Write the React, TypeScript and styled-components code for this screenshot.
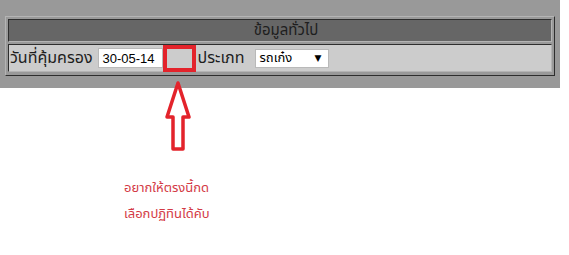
import styled, { createGlobalStyle } from "styled-components";

const GlobalStyle = createGlobalStyle`
    body {
        margin: 0;
        background: #fff;
        font-family: Tahoma, "Noto Sans Thai", "Noto Sans", sans-serif;
    }
`;

const Page = styled.div`
    position: relative;
    width: 569px;
    height: 255px;
`;

const GreyBand = styled.div`
    width: 560px;
    height: 88px;
    background: #999999;
    padding: 16px 0 0 5px;
    box-sizing: border-box;
`;

const Frame = styled.div`
    width: 550px;
    box-sizing: border-box;
    border: 1px solid;
    border-color: #b4b4b4 #2e2e2e #2e2e2e #b4b4b4;
    padding: 2px 2px 3px;
    display: grid;
    row-gap: 2px;
`;

const Cell = styled.div<{ $head?: boolean }>`
    border: 1px solid;
    border-color: #2e2e2e #b4b4b4 #b4b4b4 #2e2e2e;
    background: ${p => p.$head ? "#666666" : "#cccccc"};
    height: ${p => p.$head ? "21px" : "26px"};
    display: flex;
    align-items: center;
    justify-content: ${p => p.$head ? "center" : "flex-start"};
    color: #1e1e1e;
    font-size: ${p => p.$head ? "15px" : "16px"};
    padding: ${p => p.$head ? "0 0 0 12px" : "0 1px"};
`;

const Label = styled.span`
    white-space: nowrap;
`;

const DateBox = styled.input`
    width: 65px;
    height: 20px;
    box-sizing: border-box;
    margin: 0 0 0 6px;
    border: 1px solid #b9b9b9;
    background: #fff;
    padding: 0 3px;
    font-family: "Liberation Sans", Arial, sans-serif;
    font-size: 13px;
    color: #000;
`;

const CalendarSlot = styled.span`
    position: relative;
    width: 34px;
    height: 20px;
    flex: none;

    &::after {
        content: "";
        position: absolute;
        left: 0;
        top: -3px;
        width: 33px;
        height: 27px;
        box-sizing: border-box;
        border: 4px solid #e3232b;
    }
`;

const TypeSelect = styled.div`
    width: 74px;
    height: 19px;
    box-sizing: border-box;
    margin-left: 10px;
    border: 1px solid #b9b9b9;
    background: #fff;
    display: flex;
    align-items: center;
    justify-content: space-between;
    padding: 0 6px 0 4px;
    font-size: 13px;
    color: #000;
`;

const Caret = styled.span`
    font-size: 9px;
    font-family: "DejaVu Sans", sans-serif;
`;

const ArrowMark = styled.svg`
    position: absolute;
    left: 164px;
    top: 81px;
`;

const Note = styled.div`
    position: absolute;
    left: 124px;
    top: 175px;
    color: #d33a45;
    font-size: 13px;
    line-height: 26px;
`;

export default function App() {
    return <Page>
        <GlobalStyle />
        <GreyBand>
            <Frame>
                <Cell $head>ข้อมูลทั่วไป</Cell>
                <Cell>
                    <Label>วันที่คุ้มครอง</Label>
                    <DateBox defaultValue="30-05-14" readOnly />
                    <CalendarSlot />
                    <Label>ประเภท</Label>
                    <TypeSelect><span>รถเก๋ง</span><Caret>▼</Caret></TypeSelect>
                </Cell>
            </Frame>
        </GreyBand>
        <ArrowMark width="28" height="72" viewBox="0 0 28 72">
            <path d="M14 2 L25 36 L19 36 L19 68 L9 68 L9 36 L3 36 Z" fill="#fff" stroke="#e3232b" strokeWidth="3.5" strokeLinejoin="round" />
        </ArrowMark>
        <Note>
            <div>อยากให้ตรงนี้กด</div>
            <div>เลือกปฏิทินได้คับ</div>
        </Note>
    </Page>;
}
